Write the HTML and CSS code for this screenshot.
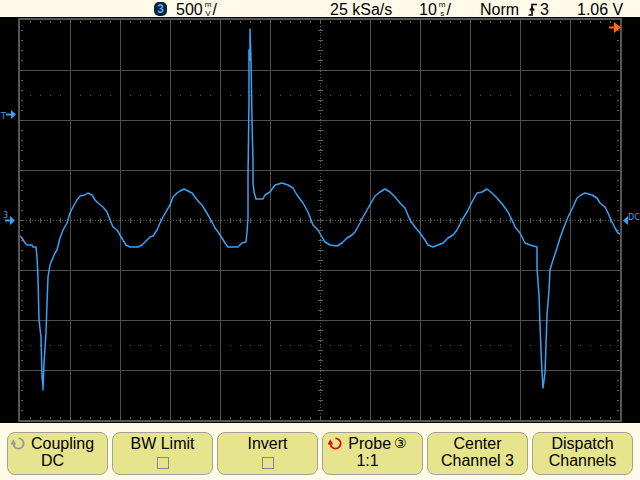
FILE: index.html
```html
<!DOCTYPE html>
<html lang="en">
<head>
    <meta charset="UTF-8">
    <title>Scope - Channel 3</title>
    <link rel="stylesheet" href="styles.css">
</head>
<body>
    <div class="topbar">
        <span class="badge">3</span>
        <span class="item">500<span class="frac"><span>m</span><span>V</span></span>/</span>
        <span class="item">25 kSa/s</span>
        <span class="item">10<span class="frac"><span>m</span><span>s</span></span>/</span>
        <span class="item">Norm</span>
        <span class="item trig">
            <svg class="edge" width="10" height="13" viewBox="0 0 10 13">
                <path d="M0.5 12 H4 V1.5 H9" fill="none" stroke="#000" stroke-width="1.6"/>
                <path d="M1.8 7.5 L4 4.5 L6.2 7.5" fill="none" stroke="#000" stroke-width="1.4"/>
            </svg>3
        </span>
        <span class="item">1.06 V</span>
    </div>

    <div class="screen">
        <svg class="grid" width="640" height="406" viewBox="0 17 640 406">
            <!-- divisions -->
            <path d="M70.5 20V420 M120.5 20V420 M170.5 20V420 M220.5 20V420 M270.5 20V420 M370.5 20V420 M420.5 20V420 M470.5 20V420 M520.5 20V420 M570.5 20V420 M20 70.5H620 M20 120.5H620 M20 170.5H620 M20 270.5H620 M20 320.5H620 M20 370.5H620" stroke="#4e4e4e" fill="none"/>
            <rect x="19" y="19" width="602" height="402" fill="none" stroke="#555" stroke-width="2"/>
            <!-- center axes -->
            <path d="M20 220.5H620 M320.5 20V420" stroke="#5c5c5c" stroke-dasharray="1 2" fill="none"/>
            <path d="M30 220.5H620" stroke="#5c5c5c" stroke-width="5" stroke-dasharray="1 9"/>
            <path d="M320.5 30V420" stroke="#5c5c5c" stroke-width="5" stroke-dasharray="1 9"/>
            <!-- border ticks -->
            <path d="M30 22H620 M30 418H620" stroke="#5c5c5c" stroke-width="2" stroke-dasharray="1 9"/>
            <path d="M22 30V420 M618 30V420" stroke="#5c5c5c" stroke-width="2" stroke-dasharray="1 9"/>
            <path d="M30 95.5H620 M30 345.5H620" stroke="#555" stroke-dasharray="1 9"/>

            <polyline class="trace" points="20,236 22,238 25,243 27,245 32,245 33,247 36,247 37,257 38,278 39,320 41,337 42,377 43,386 43,390 44,363 46,333 47,303 48,277 50,265 52,260 55,253 57,250 60,238 63,230 67,223 70,213 73,207 77,200 80,196 85,195 88,193 92,195 95,200 98,203 103,207 107,212 110,220 113,227 117,230 120,235 123,240 126,245 130,247 138,247 142,245 145,242 150,237 153,236 157,230 160,223 163,217 167,210 170,205 173,197 177,193 180,191 184,189 188,191 192,193 195,197 198,201 202,205 205,210 208,215 212,222 215,228 218,232 222,238 225,243 228,247 238,247 242,243 246,242 247,232 248,217 248,178 249,100 249,50 250,60 250,29 251,60 252,120 253,162 253,183 254,192 256,199 263,199 265,195 270,192 275,185 282,183 288,185 293,188 297,195 303,203 308,212 313,225 318,230 322,237 325,242 330,245 337,246 342,243 347,238 352,235 355,232 360,223 363,217 367,210 371,203 375,196 380,192 385,189 390,192 395,197 400,203 405,208 410,220 415,227 420,233 425,240 428,245 433,247 438,245 443,243 448,238 453,235 457,230 462,220 467,212 472,202 477,193 482,192 487,189 492,193 497,198 503,205 508,212 512,220 515,227 520,233 525,243 530,245 537,247 537,268 539,295 540,325 541,350 542,372 543,388 545,373 546,345 547,315 549,290 550,270 553,260 557,248 560,238 564,227 568,217 573,207 577,198 581,195 585,193 592,195 597,198 600,203 605,207 608,213 612,222 615,228 618,233 620,234"/>

            <!-- markers -->
            <text class="mark" x="1" y="119">T</text>
            <path d="M6 114.5H12" stroke="#39a2f5" stroke-width="2"/>
            <polygon points="11,110 16,114.5 11,119" fill="#39a2f5"/>
            <text class="mark" x="3" y="218">3</text>
            <path d="M5 220.5H11" stroke="#39a2f5" stroke-width="2"/>
            <polygon points="10,216 15,220.5 10,225" fill="#39a2f5"/>
            <polygon points="623,220.5 628,216 628,225" fill="#39a2f5"/>
            <text class="mark dc" x="628" y="220">DC</text>
            <path d="M609 27.5H616" stroke="#ff6a10" stroke-width="2"/>
            <polygon points="614,22 621,27.5 614,33" fill="#ff6a10"/>
        </svg>
    </div>

    <div class="keys">
        <div class="key">
            <div class="label with-icon">
                <svg class="knob" width="15" height="15" viewBox="0 0 16 16">
                    <path d="M8 2.5 A5.5 5.5 0 1 1 2.5 8" fill="none" stroke="#9a9a9a" stroke-width="2"/>
                    <polygon points="-0.5,9 5.5,9 2.5,3.5" fill="#9a9a9a"/>
                </svg>Coupling
            </div>
            <div class="label with-icon">DC</div>
        </div>
        <div class="key">
            <div class="label">BW Limit</div>
            <div class="label"><span class="check"></span></div>
        </div>
        <div class="key">
            <div class="label">Invert</div>
            <div class="label"><span class="check"></span></div>
        </div>
        <div class="key">
            <div class="label with-icon">
                <svg class="knob" width="15" height="15" viewBox="0 0 16 16">
                    <path d="M8 2.5 A5.5 5.5 0 1 1 2.5 8" fill="none" stroke="#e01010" stroke-width="2"/>
                    <polygon points="-0.5,9 5.5,9 2.5,3.5" fill="#e01010"/>
                </svg>Probe <span class="circ">③</span>
            </div>
            <div class="label with-icon">1:1</div>
        </div>
        <div class="key">
            <div class="label">Center</div>
            <div class="label">Channel 3</div>
        </div>
        <div class="key">
            <div class="label">Dispatch</div>
            <div class="label">Channels</div>
        </div>
    </div>
</body>
</html>
```

FILE: styles.css
```css
body {
    margin: 0;
    width: 640px;
    height: 480px;
    overflow: hidden;
    background: #fffbe8;
    font-family: "Liberation Sans", Arial, sans-serif;
    color: #000;
}

.topbar {
    height: 17px;
    display: grid;
    grid-template-columns: 22px 154px 89px 61px 48px 49px 1fr;
    align-items: center;
    padding-left: 154px;
    font-size: 16px;
    line-height: 17px;
    white-space: nowrap;
}
.badge {
    width: 13px;
    height: 14px;
    border-radius: 5px;
    background: #0c2238;
    color: #4fb0ff;
    font-size: 12px;
    font-weight: bold;
    line-height: 14px;
    text-align: center;
}
.item {
    display: flex;
    align-items: center;
}
.frac {
    display: inline-flex;
    flex-direction: column;
    align-items: center;
    font-size: 8px;
    line-height: 9px;
    margin: 0 1px 0 2px;
}
.trig {
    gap: 2px;
}
.edge {
    display: block;
}

.screen {
    height: 406px;
    background: #000;
}
.grid {
    display: block;
}
.trace {
    fill: none;
    stroke: #39a2f5;
    stroke-width: 1.5;
    stroke-linejoin: round;
}
.mark {
    fill: #39a2f5;
    font-family: "DejaVu Sans", sans-serif;
    font-size: 8px;
}
.mark.dc {
    font-size: 8px;
}

.keys {
    display: flex;
    gap: 4px;
    padding: 9px 0 0 7px;
}
.key {
    width: 101px;
    height: 43px;
    box-sizing: border-box;
    border: 1px solid #a3a294;
    border-radius: 8px;
    background: #e6e48c;
    padding-top: 2px;
    font-size: 16px;
    line-height: 17px;
}
.label {
    height: 17px;
    display: flex;
    justify-content: center;
    align-items: center;
    white-space: nowrap;
}
.label.with-icon {
    padding-right: 10px;
}
.knob {
    margin-right: 5px;
}
.circ {
    font-family: "DejaVu Sans", sans-serif;
    font-size: 14px;
    margin-left: 3px;
}
.check {
    width: 10px;
    height: 10px;
    margin-top: 4px;
    border: 1px solid #888;
}
```
